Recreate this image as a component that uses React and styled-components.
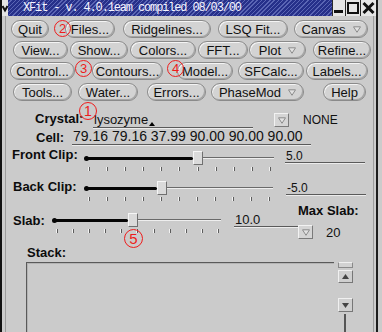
import React from 'react';
import styled, { createGlobalStyle } from 'styled-components';

const Global = createGlobalStyle`
  html, body { margin: 0; padding: 0; background: #cbcbcb; }
  body { width: 382px; height: 332px; overflow: hidden; font-family: "Liberation Sans", Arial, sans-serif; }
  * { box-sizing: border-box; }
`;

const Window = styled.div`
  position: relative;
  width: 378px;
  height: 332px;
  border-left: 2px solid #111;
  border-right: 2px solid #1c1c1c;
  background: #cbcbcb;
  display: flex;
  flex-direction: column;
  overflow: hidden;
`;

const TitleBar = styled.div`
  display: flex;
  height: 16px;
  flex: none;
`;

const MenuBox = styled.div`
  width: 6px;
  background: #e4e4e4;
  display: flex;
  align-items: center;
  justify-content: center;
`;

const TitleStrip = styled.div`
  flex: 1;
  background-color: #26308a;
  background-image: repeating-linear-gradient(135deg, #26308a 0 2px, #5a65b4 2px 3px);
  color: #f4f4ff;
  font-family: "Liberation Mono", "DejaVu Sans Mono", monospace;
  font-size: 12px;
  letter-spacing: -1.15px;
  line-height: 16px;
  padding-left: 15px;
  white-space: nowrap;
  overflow: hidden;
`;

const WinButtons = styled.div`
  display: flex;
  gap: 1px;
  background: #2a2a2a;
  padding-left: 1px;
`;

const WinBtn = styled.div`
  width: ${p => p.$w}px;
  background: #e6e6e6;
  display: flex;
  align-items: center;
  justify-content: center;
`;

const Panel = styled.div`
  flex: 1;
  margin: 0 2px 0 3px;
  border-left: 1px solid #9c9c9c;
  border-right: 1px solid #9c9c9c;
  display: flex;
  flex-direction: column;
  padding-top: 4px;
  min-height: 0;
`;

const ButtonRow = styled.div`
  display: flex;
  padding-left: ${p => p.$start}px;
  margin-bottom: 3px;
`;

const Pill = styled.div`
  flex: none;
  width: ${p => p.$w}px;
  margin-left: ${p => p.$ml || 0}px;
  height: 18px;
  border-radius: 9px;
  border: 1px solid #8a8a8a;
  background: #d3d3d3;
  box-shadow: inset 1px 1px 0 #f4f4f4, inset -1px -1px 0 #a6a6a6;
  display: flex;
  align-items: center;
  justify-content: center;
  gap: 7px;
  font-size: 13px;
  color: #111;
  white-space: nowrap;
`;

const Row = styled.div`
  display: flex;
  align-items: flex-start;
  flex: none;
  margin-top: ${p => p.$mt || 0}px;
  padding-left: ${p => p.$pl || 0}px;
  height: ${p => p.$h}px;
`;

const Label = styled.div`
  flex: none;
  width: ${p => p.$w}px;
  margin-top: ${p => p.$mt || 0}px;
  margin-left: ${p => p.$ml || 0}px;
  font-weight: bold;
  font-size: 13px;
  line-height: 14px;
  color: #0c0c0c;
  white-space: nowrap;
`;

const Field = styled.div`
  flex: none;
  width: ${p => p.$w}px;
  margin-left: ${p => p.$ml || 0}px;
  margin-top: ${p => p.$mt || 0}px;
  padding-left: 1px;
  padding-top: ${p => p.$pt || 0}px;
  font-size: ${p => p.$fs || 13}px;
  line-height: ${p => p.$lh || 15}px;
  color: #111;
  border-bottom: 1px solid #5a5a5a;
  box-shadow: 0 1px 0 #ececec;
  white-space: nowrap;
`;

const Caret = styled.span`
  display: inline-block;
  width: 0;
  height: 0;
  margin-left: 1px;
  border-left: 3px solid transparent;
  border-right: 3px solid transparent;
  border-bottom: 4px solid #000;
  vertical-align: -2px;
`;

const DropBtn = styled.div`
  flex: none;
  width: 15px;
  height: 14px;
  margin-left: ${p => p.$ml || 0}px;
  margin-top: ${p => p.$mt || 0}px;
  background: #d5d5d5;
  border: 1px solid;
  border-color: #f2f2f2 #7a7a7a #7a7a7a #f2f2f2;
  display: flex;
  align-items: center;
  justify-content: center;
`;

const PlainText = styled.div`
  flex: none;
  margin-left: ${p => p.$ml || 0}px;
  margin-top: ${p => p.$mt || 0}px;
  font-size: ${p => p.$fs || 12}px;
  line-height: 14px;
  color: #111;
`;

const SliderBox = styled.div`
  flex: none;
  width: ${p => p.$w}px;
  margin-top: ${p => p.$mt || 0}px;
  display: flex;
  flex-direction: column;
`;

const Track = styled.div`
  height: 14px;
  display: flex;
  align-items: center;
`;

const Thick = styled.div`
  position: relative;
  flex: none;
  width: ${p => p.$w}px;
  height: 3px;
  background: #050505;
  border-radius: 2px;
  &::before {
    content: "";
    position: absolute;
    left: -1px;
    top: -1px;
    width: 5px;
    height: 5px;
    border-radius: 50%;
    background: #050505;
  }
`;

const Thumb = styled.div`
  flex: none;
  width: 10px;
  height: 14px;
  background: #dadada;
  border: 1px solid;
  border-color: #f6f6f6 #707070 #707070 #f6f6f6;
`;

const Thin = styled.div`
  flex: 1;
  height: 2px;
  border-top: 1px solid #6a6a6a;
  border-bottom: 1px solid #eeeeee;
`;

const Ticks = styled.div`
  display: flex;
  justify-content: space-between;
  margin-top: 2px;
  padding: 0 ${p => p.$pr}px 0 ${p => p.$pl}px;
`;

const Tick = styled.span`
  width: 1px;
  height: 4px;
  background: #5c5c5c;
  box-shadow: -1px 0 0 #f2f2f2;
`;

const MaxCol = styled.div`
  flex: none;
  display: flex;
  flex-direction: column;
`;

const MaxLine = styled.div`
  display: flex;
  align-items: flex-start;
`;

const ListArea = styled.div`
  flex: 1;
  display: flex;
  margin-top: 2px;
  padding-left: 20px;
  min-height: 0;
`;

const ListBox = styled.div`
  width: 308px;
  height: 90px;
  border-top: 1px solid #5a5a5a;
  border-left: 1px solid #5a5a5a;
  box-shadow: inset 1px 1px 0 #b4b4b4;
`;

const Scroll = styled.div`
  width: 16px;
  margin-left: 3px;
  display: flex;
  flex-direction: column;
  align-items: center;
`;

const ScrollStub = styled.div`
  width: 15px;
  height: 6px;
  background: #d2d2d2;
  border: 1px solid #8a8a8a;
  border-top-color: #f0f0f0;
`;

const ArrowBtn = styled.div`
  width: 15px;
  height: 15px;
  margin-top: ${p => p.$mt || 0}px;
  background: #cfcfcf;
  border: 1px solid;
  border-color: #f0f0f0 #777 #777 #f0f0f0;
  display: flex;
  align-items: center;
  justify-content: center;
`;

const ScrollRail = styled.div`
  width: 2px;
  height: 20px;
  margin-top: 2px;
  background: #555;
`;

const Badge = styled.div`
  position: absolute;
  left: ${p => p.$x}px;
  top: ${p => p.$y}px;
  width: ${p => p.$d}px;
  height: ${p => p.$d}px;
  border-radius: 50%;
  border: 1.5px solid #ee1c1c;
  color: #ee1c1c;
  font-family: "Liberation Sans", Arial, sans-serif;
  font-size: ${p => p.$d - 4}px;
  line-height: 1;
  display: flex;
  align-items: center;
  justify-content: center;
  background: transparent;
`;

const Tri = () => (
  <svg width="8" height="7" viewBox="0 0 8 7">
    <path d="M0.5 0.8 H7.5 L4 6.3 Z" fill="#e2e2e2" stroke="#8c8c8c" strokeWidth="1" />
  </svg>
);

const rows = [
  { start: 5, items: [
    { l: 'Quit', w: 38 }, { l: 'Files...', w: 50, ml: 16 }, { l: 'Ridgelines...', w: 88, ml: 8 },
    { l: 'LSQ Fit...', w: 70, ml: 7 }, { l: 'Canvas', w: 74, ml: 6, tri: true } ] },
  { start: 7, items: [
    { l: 'View...', w: 55 }, { l: 'Show...', w: 58, ml: 2 }, { l: 'Colors...', w: 66, ml: 2 },
    { l: 'FFT...', w: 50, ml: 2 }, { l: 'Plot', w: 57, ml: 1, tri: true }, { l: 'Refine...', w: 58, ml: 7 } ] },
  { start: 4, items: [
    { l: 'Control...', w: 65 }, { l: 'Contours...', w: 71, ml: 17 }, { l: 'Model...', w: 56, ml: 14 },
    { l: 'SFCalc...', w: 66, ml: 5 }, { l: 'Labels...', w: 62, ml: 2 } ] },
  { start: 7, items: [
    { l: 'Tools...', w: 59 }, { l: 'Water...', w: 60, ml: 6 }, { l: 'Errors...', w: 59, ml: 9 },
    { l: 'PhaseMod', w: 93, ml: 5, tri: true }, { l: 'Help', w: 43, ml: 19 } ] },
];

const Slider = ({ w, thumb, mt, pl, pr }) => (
  <SliderBox $w={w} $mt={mt}>
    <Track>
      <Thick $w={thumb} />
      <Thumb />
      <Thin />
    </Track>
    <Ticks $pl={pl} $pr={pr}>
      {Array.from({ length: 11 }).map((_, i) => <Tick key={i} />)}
    </Ticks>
  </SliderBox>
);

export default function App() {
  return (
    <>
      <Global />
      <Window>
        <TitleBar>
          <MenuBox>
            <svg width="6" height="9" viewBox="0 0 6 9">
              <path d="M0.5 2 L3 6.5 L5.5 2" fill="none" stroke="#111" strokeWidth="2" />
            </svg>
          </MenuBox>
          <TitleStrip>XFit - v. 4.0.1eam compiled 08/03/00</TitleStrip>
          <WinButtons>
            <WinBtn $w={12}>
              <svg width="12" height="16" viewBox="0 0 12 16"><rect x="1" y="10" width="9" height="3" fill="#111" /></svg>
            </WinBtn>
            <WinBtn $w={14}>
              <svg width="14" height="16" viewBox="0 0 14 16"><rect x="2" y="3" width="10" height="10" fill="none" stroke="#111" strokeWidth="2" /></svg>
            </WinBtn>
            <WinBtn $w={15}>
              <svg width="15" height="16" viewBox="0 0 15 16"><path d="M2.5 3 L12.5 13 M12.5 3 L2.5 13" stroke="#111" strokeWidth="3" /></svg>
            </WinBtn>
          </WinButtons>
        </TitleBar>

        <Panel>
          {rows.map((r, i) => (
            <ButtonRow key={i} $start={r.start}>
              {r.items.map(b => (
                <Pill key={b.l} $w={b.w} $ml={b.ml}>
                  <span>{b.l}</span>
                  {b.tri && <Tri />}
                </Pill>
              ))}
            </ButtonRow>
          ))}

          <Row $mt={7} $pl={29} $h={16}>
            <Label $w={58} $mt={1}>Crystal:</Label>
            <Field $w={160} $h={16} $pt={1}>lysozyme<Caret /></Field>
            <DropBtn $ml={21} $mt={2} ><Tri /></DropBtn>
            <PlainText $ml={14} $mt={2} $fs={12}>NONE</PlainText>
          </Row>

          <Row $mt={2} $pl={30} $h={16}>
            <Label $w={36} $mt={2}>Cell:</Label>
            <Field $w={239} $fs={14} $lh={15}>79.16 79.16 37.99 90.00 90.00 90.00</Field>
          </Row>

          <Row $mt={3} $pl={6} $h={24}>
            <Label $w={73}>Front Clip:</Label>
            <Slider w={189} thumb={108} mt={3} pl={4} pr={3} />
            <Field $w={80} $ml={11} $mt={2} $fs={12} $lh={12}>5.0</Field>
          </Row>

          <Row $mt={8} $pl={7} $h={21}>
            <Label $w={72}>Back Clip:</Label>
            <Slider w={188} thumb={72} mt={1} pl={4} pr={3} />
            <Field $w={80} $ml={13} $mt={2} $fs={12} $lh={12}>-5.0</Field>
          </Row>

          <Row $mt={3} $pl={7} $h={36}>
            <Label $w={40} $mt={10}>Slab:</Label>
            <Slider w={168} thumb={75} mt={9} pl={4} pr={2} />
            <Field $w={64} $ml={13} $mt={10} $fs={13} $lh={12}>10.0</Field>
            <MaxCol>
              <Label $w={70}>Max Slab:</Label>
              <MaxLine>
                <DropBtn $mt={7}><Tri /></DropBtn>
                <PlainText $ml={13} $mt={8} $fs={13}>20</PlainText>
              </MaxLine>
            </MaxCol>
          </Row>

          <Row $mt={6} $pl={21} $h={14}>
            <Label $w={60}>Stack:</Label>
          </Row>

          <ListArea>
            <ListBox />
            <Scroll>
              <ScrollStub />
              <ArrowBtn $mt={2}>
                <svg width="7" height="5" viewBox="0 0 7 5"><path d="M0 5 L3.5 0 L7 5 Z" fill="#444" /></svg>
              </ArrowBtn>
              <ArrowBtn $mt={15}>
                <svg width="7" height="5" viewBox="0 0 7 5"><path d="M0 0 L7 0 L3.5 5 Z" fill="#444" /></svg>
              </ArrowBtn>
              <ScrollRail />
            </Scroll>
          </ListArea>
        </Panel>

        <Badge $x={52} $y={20} $d={17}>2</Badge>
        <Badge $x={73} $y={60} $d={17}>3</Badge>
        <Badge $x={165} $y={60} $d={17}>4</Badge>
        <Badge $x={77} $y={102} $d={18}>1</Badge>
        <Badge $x={122} $y={229} $d={19}>5</Badge>
      </Window>
    </>
  );
}
